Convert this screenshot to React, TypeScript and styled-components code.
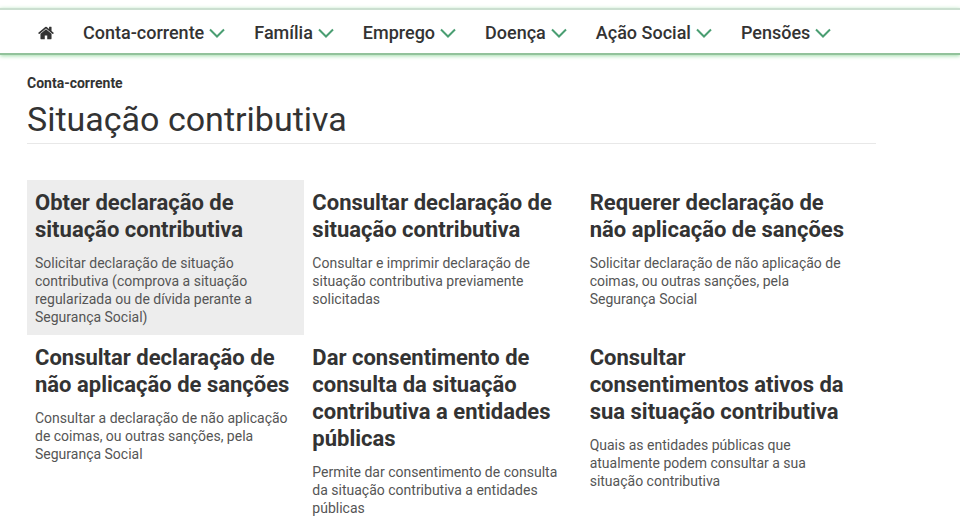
import React from 'react';
import styled, { createGlobalStyle } from 'styled-components';

const GlobalStyle = createGlobalStyle`
  *, *::before, *::after { box-sizing: border-box; }
  body { margin: 0; background: #fff; color: #333; font-family: Roboto, "Liberation Sans", sans-serif; }
`;

const Header = styled.header`
  margin-top: 8px;
  height: 47px;
  border-top: 2px solid #cbdfd0;
  border-bottom: 2px solid #92c29b;
  box-shadow: 0 1px 4px #9fdcaa;
`;

const Nav = styled.nav`
  display: flex;
  align-items: center;
  height: 100%;
  gap: 29px;
  padding: 2px 38px 0;
`;

const HomeLink = styled.a`
  display: flex;
  width: 16px;
  color: #333;
`;

const MenuButton = styled.button`
  display: flex;
  align-items: center;
  gap: 5px;
  padding: 0;
  border: 0;
  background: none;
  color: #333;
  font: 500 18px/24px Roboto, sans-serif;
  white-space: nowrap;
  cursor: pointer;
`;

const Main = styled.main`
  margin: 0 84px 0 27px;
  padding-top: 18px;
`;

const Crumb = styled.a`
  display: block;
  width: fit-content;
  color: #333;
  font-size: 14px;
  line-height: 20px;
  font-weight: 700;
  text-decoration: none;
`;

const Title = styled.h1`
  margin: 0;
  padding: 6px 0 4px;
  border-bottom: 1px solid #e8e8e8;
  font-size: 34px;
  line-height: 40px;
  font-weight: 400;
`;

const Grid = styled.div`
  display: grid;
  grid-template-columns: repeat(3, 1fr);
  margin: 36px 17px 0 0;
`;

const Card = styled.a<{ $active?: boolean }>`
  padding: 9px 10px 9px 8px;
  background: ${(p) => (p.$active ? '#ededed' : 'transparent')};
  color: #333;
  text-decoration: none;
`;

const CardTitle = styled.h2`
  margin: 0 0 11px;
  font-size: 22px;
  line-height: 27px;
  font-weight: 700;
`;

const CardText = styled.p`
  margin: 0;
  color: #555;
  font-size: 14px;
  line-height: 18px;
`;

const menus = ['Conta-corrente', 'Família', 'Emprego', 'Doença', 'Ação Social', 'Pensões'];

const cards = [
  ['Obter declaração de situação contributiva', 'Solicitar declaração de situação contributiva (comprova a situação regularizada ou de dívida perante a Segurança Social)'],
  ['Consultar declaração de situação contributiva', 'Consultar e imprimir declaração de situação contributiva previamente solicitadas'],
  ['Requerer declaração de não aplicação de sanções', 'Solicitar declaração de não aplicação de coimas, ou outras sanções, pela Segurança Social'],
  ['Consultar declaração de não aplicação de sanções', 'Consultar a declaração de não aplicação de coimas, ou outras sanções, pela Segurança Social'],
  ['Dar consentimento de consulta da situação contributiva a entidades públicas', 'Permite dar consentimento de consulta da situação contributiva a entidades públicas'],
  ['Consultar consentimentos ativos da sua situação contributiva', 'Quais as entidades públicas que atualmente podem consultar a sua situação contributiva'],
];

const HomeIcon = () => (
  <svg width="17" height="18" viewBox="0 0 1664 1792" fill="currentColor" aria-hidden="true">
    <path d="M1408 992v480q0 26-19 45t-45 19h-384v-384h-256v384h-384q-26 0-45-19t-19-45v-480q0-1 .5-3t.5-3l575-474 575 474q1 2 1 6zm223-69l-62 74q-8 9-21 11h-3q-13 0-21-7l-692-577-692 577q-12 8-24 7-13-2-21-11l-62-74q-8-10-7-23.5t11-21.5l719-599q32-26 76-26t76 26l244 204v-195q0-14 9-23t23-9h192q14 0 23 9t9 23v408l219 182q10 8 11 21.5t-7 23.5z" />
  </svg>
);

const Chevron = () => (
  <svg width="16" height="10" viewBox="0 0 16 10" fill="none" stroke="#4a9e72" strokeWidth="2" aria-hidden="true">
    <path d="M1 1.5 8 8.5 15 1.5" />
  </svg>
);

export default function App() {
  return (
    <>
      <GlobalStyle />
      <Header>
        <Nav>
          <HomeLink href="#" aria-label="Início"><HomeIcon /></HomeLink>
          {menus.map((m) => <MenuButton key={m} type="button">{m}<Chevron /></MenuButton>)}
        </Nav>
      </Header>
      <Main>
        <Crumb href="#">Conta-corrente</Crumb>
        <Title>Situação contributiva</Title>
        <Grid>
          {cards.map(([title, text], i) => (
            <Card key={title} href="#" $active={i === 0}>
              <CardTitle>{title}</CardTitle>
              <CardText>{text}</CardText>
            </Card>
          ))}
        </Grid>
      </Main>
    </>
  );
}
